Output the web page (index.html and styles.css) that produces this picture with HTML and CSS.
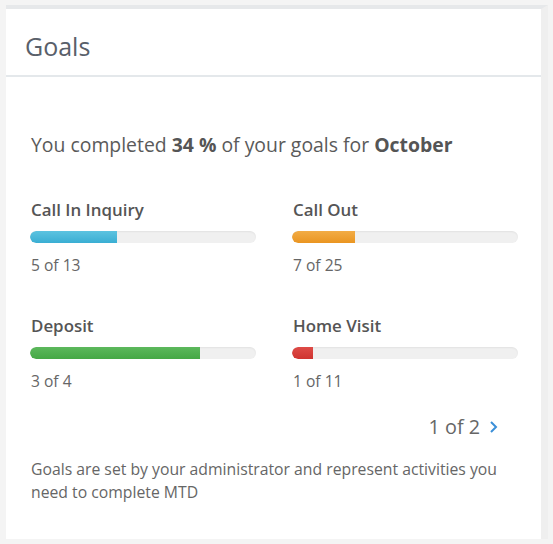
FILE: index.html
```html
<!DOCTYPE html>
<html>
<head>
<meta charset="utf-8">
<link rel="stylesheet" href="styles.css">
</head>
<body>
<div class="page">
  <div class="card">
    <div class="card-header">
      <h2 class="title">Goals</h2>
    </div>
    <div class="card-body">
      <p class="summary">You completed <b>34 %</b> of your goals for <b>October</b></p>
      <div class="goals">
        <div class="goal">
          <div class="goal-label">Call In Inquiry</div>
          <div class="bar"><div class="fill fill-blue" style="width:38.5%"></div></div>
          <div class="goal-value">5 of 13</div>
        </div>
        <div class="goal">
          <div class="goal-label">Call Out</div>
          <div class="bar"><div class="fill fill-orange" style="width:28%"></div></div>
          <div class="goal-value">7 of 25</div>
        </div>
        <div class="goal">
          <div class="goal-label">Deposit</div>
          <div class="bar"><div class="fill fill-green" style="width:75%"></div></div>
          <div class="goal-value">3 of 4</div>
        </div>
        <div class="goal">
          <div class="goal-label">Home Visit</div>
          <div class="bar"><div class="fill fill-red" style="width:9.1%"></div></div>
          <div class="goal-value">1 of 11</div>
        </div>
      </div>
      <div class="pager">
        <span>1 of 2</span>
        <svg class="chev" width="9" height="14" viewBox="0 0 9 14"><path d="M2 2 L7 7 L2 12" fill="none" stroke="#3b8fd8" stroke-width="2"/></svg>
      </div>
      <p class="note">Goals are set by your administrator and represent activities you need to complete MTD</p>
    </div>
  </div>
</div>
</body>
</html>
```
FILE: styles.css
```css
html, body {
  margin: 0;
  padding: 0;
  background: #f4f4f4;
  font-family: "Open Sans", "Liberation Sans", sans-serif;
}
.page {
  padding: 5px 5px 5px 6px;
  display: flex;
}
.card {
  width: 542px;
  background: #fff;
  border-top: 4px solid #e6e8ea;
  border-right: 7px solid #efefef;
  height: 534px;
  box-sizing: border-box;
  display: flex;
  flex-direction: column;
}
.card-header {
  height: 66px;
  border-bottom: 2px solid #e4e8eb;
  display: flex;
  align-items: center;
  padding-left: 19px;
}
.title {
  margin: 0;
  font-size: 25px;
  font-weight: 400;
  color: #59606a;
  line-height: 30px;
  padding-top: 8px;
}
.card-body {
  padding: 55px 23px 0 24px;
}
.summary {
  margin: 0;
  font-size: 19.4px;
  line-height: 26px;
  color: #5a5a5a;
  padding-left: 1px;
}
.summary b {
  font-weight: 700;
  color: #555;
}
.goals {
  margin-top: 40px;
  display: grid;
  grid-template-columns: 226px 226px;
  column-gap: 36px;
  row-gap: 38px;
}
.goal-label {
  font-size: 16.9px;
  font-weight: 600;
  line-height: 24px;
  color: #555;
  padding-left: 1px;
}
.bar {
  margin-top: 9px;
  height: 12px;
  border-radius: 6px;
  background: #f0f0f0;
  box-shadow: inset 0 1px 2px rgba(0,0,0,0.06);
  overflow: hidden;
}
.fill {
  height: 100%;
  border-radius: 6px 0 0 6px;
}
.fill-blue { background: linear-gradient(#5cc3e0, #3aaed3); }
.fill-orange { background: linear-gradient(#f2ac45, #ea9521); }
.fill-green { background: linear-gradient(#5cb85c, #45a845); }
.fill-red { background: linear-gradient(#de4b47, #cf3430); }
.goal-value {
  margin-top: 11px;
  font-size: 15.6px;
  line-height: 22px;
  color: #666;
  padding-left: 1px;
}
.pager {
  margin-top: 22px;
  display: flex;
  justify-content: flex-end;
  align-items: center;
  gap: 9px;
  padding-right: 20px;
  font-size: 19.8px;
  line-height: 26px;
  color: #666;
}
.chev { display: block; }
.note {
  margin: 18px 0 0 0;
  font-size: 15.75px;
  line-height: 23px;
  color: #666;
  padding-left: 1px;
}
```
